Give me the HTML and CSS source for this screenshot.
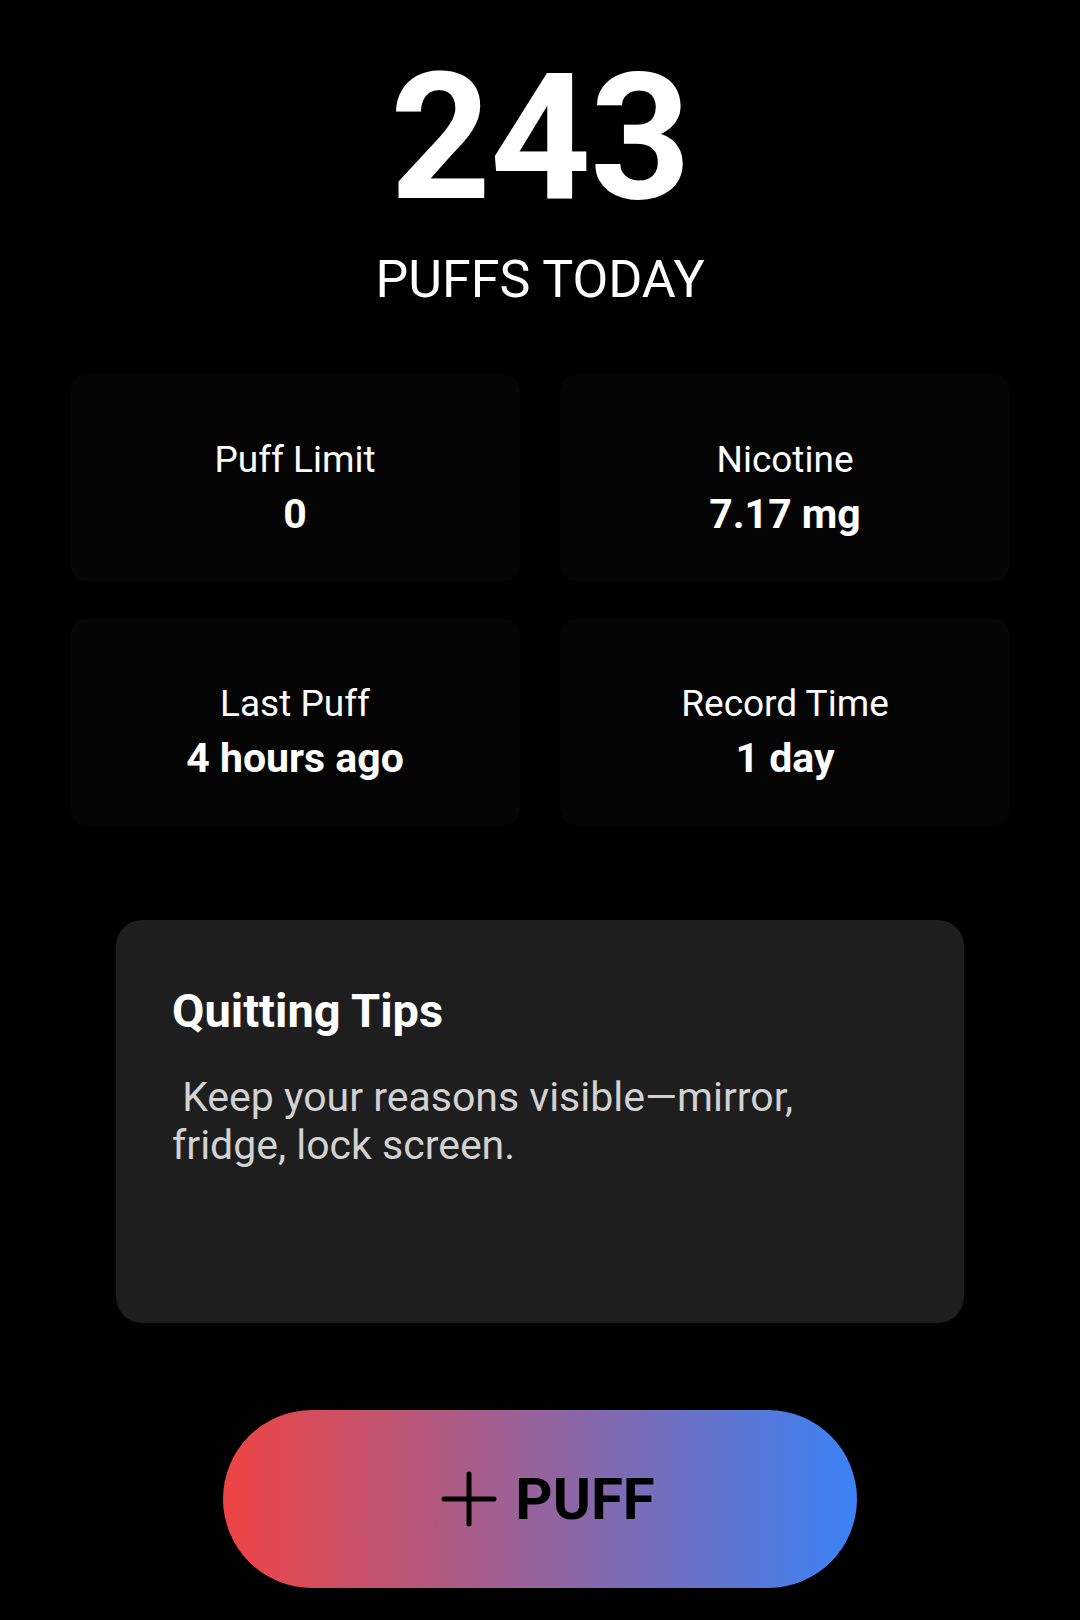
FILE: index.html
```html
<!DOCTYPE html>
<html lang="en">
<head>
<meta charset="utf-8">
<title>Puffs Today</title>
<link rel="stylesheet" href="styles.css">
</head>
<body>
<main class="screen">
  <section class="hero">
    <div class="count">243</div>
    <div class="count-label">PUFFS TODAY</div>
  </section>

  <section class="stats">
    <div class="stat-card">
      <div class="stat-label">Puff Limit</div>
      <div class="stat-value">0</div>
    </div>
    <div class="stat-card">
      <div class="stat-label">Nicotine</div>
      <div class="stat-value">7.17 mg</div>
    </div>
    <div class="stat-card">
      <div class="stat-label">Last Puff</div>
      <div class="stat-value">4 hours ago</div>
    </div>
    <div class="stat-card">
      <div class="stat-label">Record Time</div>
      <div class="stat-value">1 day</div>
    </div>
  </section>

  <section class="tips">
    <h2 class="tips-title">Quitting Tips</h2>
    <p class="tips-text">&nbsp;Keep your reasons visible—mirror, fridge, lock screen.</p>
  </section>

  <div class="action">
    <button class="puff-btn" type="button">
      <svg class="plus" width="56" height="56" viewBox="0 0 56 56" aria-hidden="true">
        <path d="M28 3 V53 M3 28 H53" stroke="#000" stroke-width="5" stroke-linecap="round" fill="none"/>
      </svg>
      <span class="puff-text">PUFF</span>
    </button>
  </div>
</main>
</body>
</html>
```

FILE: styles.css
```css
* {
  box-sizing: border-box;
}

html, body {
  margin: 0;
  padding: 0;
  background: #000;
}

body {
  font-family: Roboto, "Liberation Sans", Arial, sans-serif;
  color: #fff;
  width: 1080px;
  min-height: 1620px;
}

.screen {
  display: flex;
  flex-direction: column;
  align-items: center;
}

.hero {
  padding-top: 50px;
  display: flex;
  flex-direction: column;
  align-items: center;
}

.count {
  font-size: 176px;
  font-weight: 700;
  line-height: 1;
  letter-spacing: -1px;
}

.count-label {
  margin-top: 28px;
  font-size: 52px;
  font-weight: 400;
  line-height: 1;
}

.stats {
  margin-top: 69px;
  width: 940px;
  display: grid;
  grid-template-columns: 1fr 1fr;
  column-gap: 40px;
  row-gap: 38px;
}

.stat-card {
  height: 206px;
  background: #050505;
  border-radius: 16px;
  padding-top: 64px;
  display: flex;
  flex-direction: column;
  align-items: center;
}

.stat-label {
  font-size: 37px;
  line-height: 42px;
  font-weight: 400;
}

.stat-value {
  margin-top: 10px;
  font-size: 41px;
  line-height: 46px;
  font-weight: 700;
}

.tips {
  margin-top: 95px;
  width: 848px;
  height: 403px;
  background: #1e1e1e;
  border-radius: 26px;
  padding: 64px 80px 0 56px;
}

.tips-title {
  margin: 0;
  font-size: 47px;
  line-height: 54px;
  font-weight: 700;
  color: #fff;
}

.tips-text {
  margin: 35px 0 0 0;
  font-size: 41px;
  line-height: 48px;
  font-weight: 400;
  color: #d2d2d2;
}

.action {
  margin-top: 87px;
}

.puff-btn {
  width: 634px;
  height: 178px;
  border: none;
  border-radius: 89px;
  background: linear-gradient(90deg, #ef4444 0%, #3b82f6 100%);
  display: flex;
  align-items: center;
  justify-content: center;
  gap: 18px;
  padding: 0 0 0 16px;
  font-family: Roboto, "Liberation Sans", Arial, sans-serif;
  cursor: pointer;
}

.plus {
  display: block;
  flex: none;
}

.puff-text {
  font-size: 58px;
  font-weight: 700;
  line-height: 1;
  color: #000;
}
```
